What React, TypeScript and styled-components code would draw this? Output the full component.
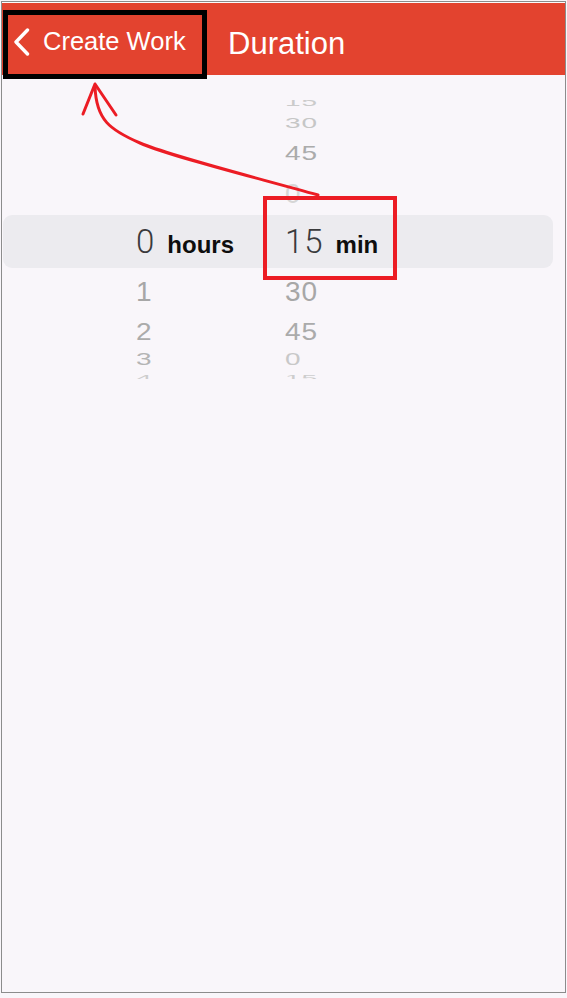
import React from 'react';
import styled, { createGlobalStyle } from 'styled-components';

const GlobalStyle = createGlobalStyle`
    html,
    body {
        margin: 0;
        padding: 0;
        background: #f9f6fa;
    }

    body {
        font-family: 'Liberation Sans', Arial, sans-serif;
    }
`;

const Page = styled.div`
    position: relative;
    width: 567px;
    height: 998px;
    background: #f9f6fa;
    overflow: hidden;
`;

const Frame = styled.div`
    margin: 1px 1px 0 1px;
    height: 990px;
    border: 1px solid #8c8c8c;
`;

const StatusStrip = styled.div`
    height: 1px;
    background: #fbfbfb;
`;

const Header = styled.header`
    position: relative;
    z-index: 1;
    display: flex;
    align-items: flex-start;
    height: 72px;
    padding: 7px 0 0 1px;
    box-sizing: border-box;
    background: #e3432f;
    color: #fff;
`;

const BackButton = styled.button`
    display: flex;
    align-items: center;
    gap: 13px;
    flex-shrink: 0;
    width: 204px;
    height: 69px;
    box-sizing: border-box;
    padding: 0 0 6px 5px;
    border: 5px solid #000;
    background: transparent;
    color: #fff;
    font-family: 'Liberation Sans', Arial, sans-serif;
    font-size: 25.5px;
    cursor: pointer;
`;

const Title = styled.h1`
    align-self: center;
    margin: 2px 0 0 21px;
    font-size: 31px;
    font-weight: 400;
    line-height: 1;
`;

const Picker = styled.div`
    display: flex;
    flex-direction: column;
    margin: 25px 12px 0 1px;
`;

const Row = styled.div<{ $h: number; $align: string; $selected?: boolean }>`
    display: grid;
    grid-template-columns: 149px 1fr;
    grid-template-rows: minmax(0, 1fr);
    align-items: ${(props) => props.$align};
    height: ${(props) => props.$h}px;
    padding-left: 133px;
    overflow: hidden;
    border-radius: ${(props) => (props.$selected ? '9px' : '0')};
    background: ${(props) => (props.$selected ? '#ecebef' : 'transparent')};
`;

const Cell = styled.div`
    display: flex;
    align-items: baseline;
    gap: 12px;
`;

const Num = styled.span<{ $scale: number; $tone: string; $origin: string; $shift: number }>`
    display: inline-block;
    font-family: 'Liberation Sans', Arial, sans-serif;
    font-size: 28px;
    line-height: 1;
    letter-spacing: 1px;
    color: ${(props) => props.$tone};
    transform: scaleY(${(props) => props.$scale});
    transform-origin: ${(props) => props.$origin};
    margin-bottom: ${(props) => props.$shift}px;
`;

const Selected = styled.span`
    font-family: Roboto, 'Liberation Sans', sans-serif;
    font-size: 33px;
    font-weight: 300;
    line-height: 1;
    letter-spacing: 1px;
    color: #3a3a3c;
`;

const Unit = styled.span`
    font-family: 'Liberation Sans', Arial, sans-serif;
    font-size: 24px;
    font-weight: 700;
    line-height: 1;
    color: #0e0e0e;
`;

const Overlay = styled.svg`
    position: absolute;
    top: 0;
    left: 0;
    pointer-events: none;
`;

type WheelRow = {
    h: number;
    align: string;
    scale: number;
    origin: string;
    shift: number;
    hour: string;
    min: string;
    hourTone: string;
    minTone: string;
};

const above: WheelRow[] = [
    { h: 12, align: 'end', scale: 0.45, origin: 'center bottom', shift: 4, hour: '', min: '15', hourTone: '#cbcbcb', minTone: '#cbcbcb' },
    { h: 21, align: 'center', scale: 0.5, origin: 'center', shift: 0, hour: '', min: '30', hourTone: '#c6c6c6', minTone: '#c6c6c6' },
    { h: 39, align: 'center', scale: 0.75, origin: 'center', shift: 0, hour: '', min: '45', hourTone: '#ababab', minTone: '#ababab' },
    { h: 43, align: 'center', scale: 1, origin: 'center', shift: 0, hour: '', min: '0', hourTone: '#d6d6d6', minTone: '#d6d6d6' },
];

const below: WheelRow[] = [
    { h: 48, align: 'center', scale: 1, origin: 'center', shift: 0, hour: '1', min: '30', hourTone: '#a7a7a7', minTone: '#a7a7a7' },
    { h: 31, align: 'center', scale: 0.85, origin: 'center', shift: 0, hour: '2', min: '45', hourTone: '#ababab', minTone: '#ababab' },
    { h: 26, align: 'center', scale: 0.6, origin: 'center', shift: 0, hour: '3', min: '0', hourTone: '#b4b4b4', minTone: '#c8c8c8' },
    { h: 6, align: 'start', scale: 0.35, origin: 'center top', shift: 0, hour: '4', min: '15', hourTone: '#cdcdcd', minTone: '#cdcdcd' },
];

const WheelLine: React.FC<{ row: WheelRow }> = ({ row }) => (
    <Row $h={row.h} $align={row.align}>
        <Cell>
            {row.hour && (
                <Num $scale={row.scale} $tone={row.hourTone} $origin={row.origin} $shift={row.shift}>
                    {row.hour}
                </Num>
            )}
        </Cell>
        <Cell>
            <Num $scale={row.scale} $tone={row.minTone} $origin={row.origin} $shift={row.shift}>
                {row.min}
            </Num>
        </Cell>
    </Row>
);

const App: React.FC = () => {
    return (
        <Page>
            <GlobalStyle />
            <Frame>
                <StatusStrip />
                <Header>
                    <BackButton>
                        <svg width="17" height="28" viewBox="0 0 17 28">
                            <polyline
                                points="14.5,2 3,14 14.5,26"
                                fill="none"
                                stroke="#fff"
                                strokeWidth="3.4"
                                strokeLinecap="round"
                                strokeLinejoin="round"
                            />
                        </svg>
                        Create Work
                    </BackButton>
                    <Title>Duration</Title>
                </Header>
                <Picker>
                    {above.map((row, i) => (
                        <WheelLine key={`a${i}`} row={row} />
                    ))}
                    <Row $h={53} $align="center" $selected>
                        <Cell>
                            <Selected>0</Selected>
                            <Unit>hours</Unit>
                        </Cell>
                        <Cell>
                            <Selected>15</Selected>
                            <Unit>min</Unit>
                        </Cell>
                    </Row>
                    {below.map((row, i) => (
                        <WheelLine key={`b${i}`} row={row} />
                    ))}
                </Picker>
            </Frame>
            <Overlay width="567" height="998" viewBox="0 0 567 998">
                <rect x="265" y="198" width="130" height="80" fill="none" stroke="#ec1c24" strokeWidth="4" />
                <path
                    d="M318 195 C250 176 170 156 140 143 C110 130 96 120 95 86"
                    fill="none"
                    stroke="#ec1c24"
                    strokeWidth="3"
                    strokeLinecap="round"
                />
                <path
                    d="M83 114 L95 84 L116 115"
                    fill="none"
                    stroke="#ec1c24"
                    strokeWidth="3"
                    strokeLinecap="round"
                    strokeLinejoin="round"
                />
            </Overlay>
        </Page>
    );
};

export default App;
